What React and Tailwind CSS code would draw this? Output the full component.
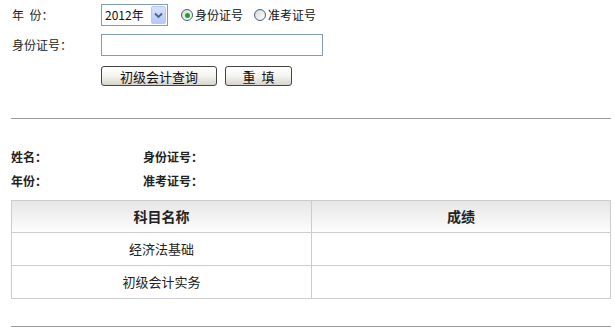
import React from "react";

const font = { fontFamily: '"Noto Sans CJK SC", "Liberation Sans", sans-serif' };

function Radio({ checked, label }) {
  return (
    <label className="flex items-center">
      <span className="w-[12px] h-[12px] rounded-full border border-[#38618c] bg-gradient-to-br from-[#d8d8d2] to-white flex items-center justify-center">
        {checked && <span className="w-[5px] h-[5px] rounded-full bg-[#21a121]" />}
      </span>
      <span className="ml-[2px] text-[12px] leading-[14px] text-[#111]">{label}</span>
    </label>
  );
}

function Btn({ children, w }) {
  return (
    <div
      className={`${w} h-[20px] border border-[#444] rounded-[3px] bg-gradient-to-b from-white via-[#f4f4f0] to-[#d6d4cc] flex items-center justify-center text-[13px] text-[#111] leading-none`}
    >
      {children}
    </div>
  );
}

export default function App() {
  return (
    <div className="w-[615px] h-[334px] bg-white text-[#222] overflow-hidden" style={font}>
      {/* row 1 */}
      <div className="flex items-center h-[22px] mt-[4px]">
        <div className="w-[101px] pl-[12px] text-[12px]">年&nbsp;&nbsp;份：</div>
        <div className="w-[67px] h-[22px] border border-[#7f9db9] flex items-center bg-white">
          <span className="text-[12px] pl-[3px] flex-1 leading-none text-[#111]">2012年</span>
          <span className="w-[15px] h-[18px] mr-[1px] rounded-[2px] bg-gradient-to-b from-[#d6e3fc] to-[#b4c9f6] border border-[#b6c8f3] flex items-center justify-center">
            <svg width="9" height="7" viewBox="0 0 9 7">
              <path d="M1 1.5 L4.5 5 L8 1.5" fill="none" stroke="#4d6185" strokeWidth="1.8" />
            </svg>
          </span>
        </div>
        <div className="ml-[13px] flex items-center gap-[11px]">
          <Radio checked label="身份证号" />
          <Radio label="准考证号" />
        </div>
      </div>
      {/* row 2 */}
      <div className="flex items-center h-[22px] mt-[8px]">
        <div className="w-[101px] pl-[12px] text-[12px]">身份证号：</div>
        <div className="w-[222px] h-[22px] border border-[#7f9db9] bg-white" />
      </div>
      {/* row 3 */}
      <div className="flex items-center h-[20px] mt-[10px] pl-[101px] gap-[8px]">
        <Btn w="w-[116px]">初级会计查询</Btn>
        <Btn w="w-[67px]">重&nbsp;&nbsp;填</Btn>
      </div>
      {/* hr */}
      <div className="mt-[32px] mx-[11px] w-[600px] h-px bg-[#9c9a94]" />
      {/* info */}
      <div className="mt-[26px] pl-[11px] text-[12px] font-bold text-[#222]">
        <div className="flex h-[24px] items-center">
          <div className="w-[132px]">姓名：</div>
          <div>身份证号：</div>
        </div>
        <div className="flex h-[24px] items-center">
          <div className="w-[132px]">年份：</div>
          <div>准考证号：</div>
        </div>
      </div>
      {/* table */}
      <div className="mt-[7px] ml-[11px] w-[600px] border border-[#cccccc]">
        <div className="grid grid-cols-[300px_1fr] h-[32px] bg-gradient-to-b from-[#e6e6e6] to-[#fdfdfd] border-b border-[#cccccc]">
          <div className="flex items-center justify-center border-r border-[#cccccc] text-[14px] font-bold">科目名称</div>
          <div className="flex items-center justify-center text-[14px] font-bold">成绩</div>
        </div>
        <div className="grid grid-cols-[300px_1fr] h-[33px] border-b border-[#cccccc]">
          <div className="flex items-center justify-center border-r border-[#cccccc] text-[13px]">经济法基础</div>
          <div />
        </div>
        <div className="grid grid-cols-[300px_1fr] h-[32px]">
          <div className="flex items-center justify-center border-r border-[#cccccc] text-[13px]">初级会计实务</div>
          <div />
        </div>
      </div>
      <div className="mt-[27px] mx-[11px] w-[600px] h-px bg-[#9c9a94]" />
    </div>
  );
}
